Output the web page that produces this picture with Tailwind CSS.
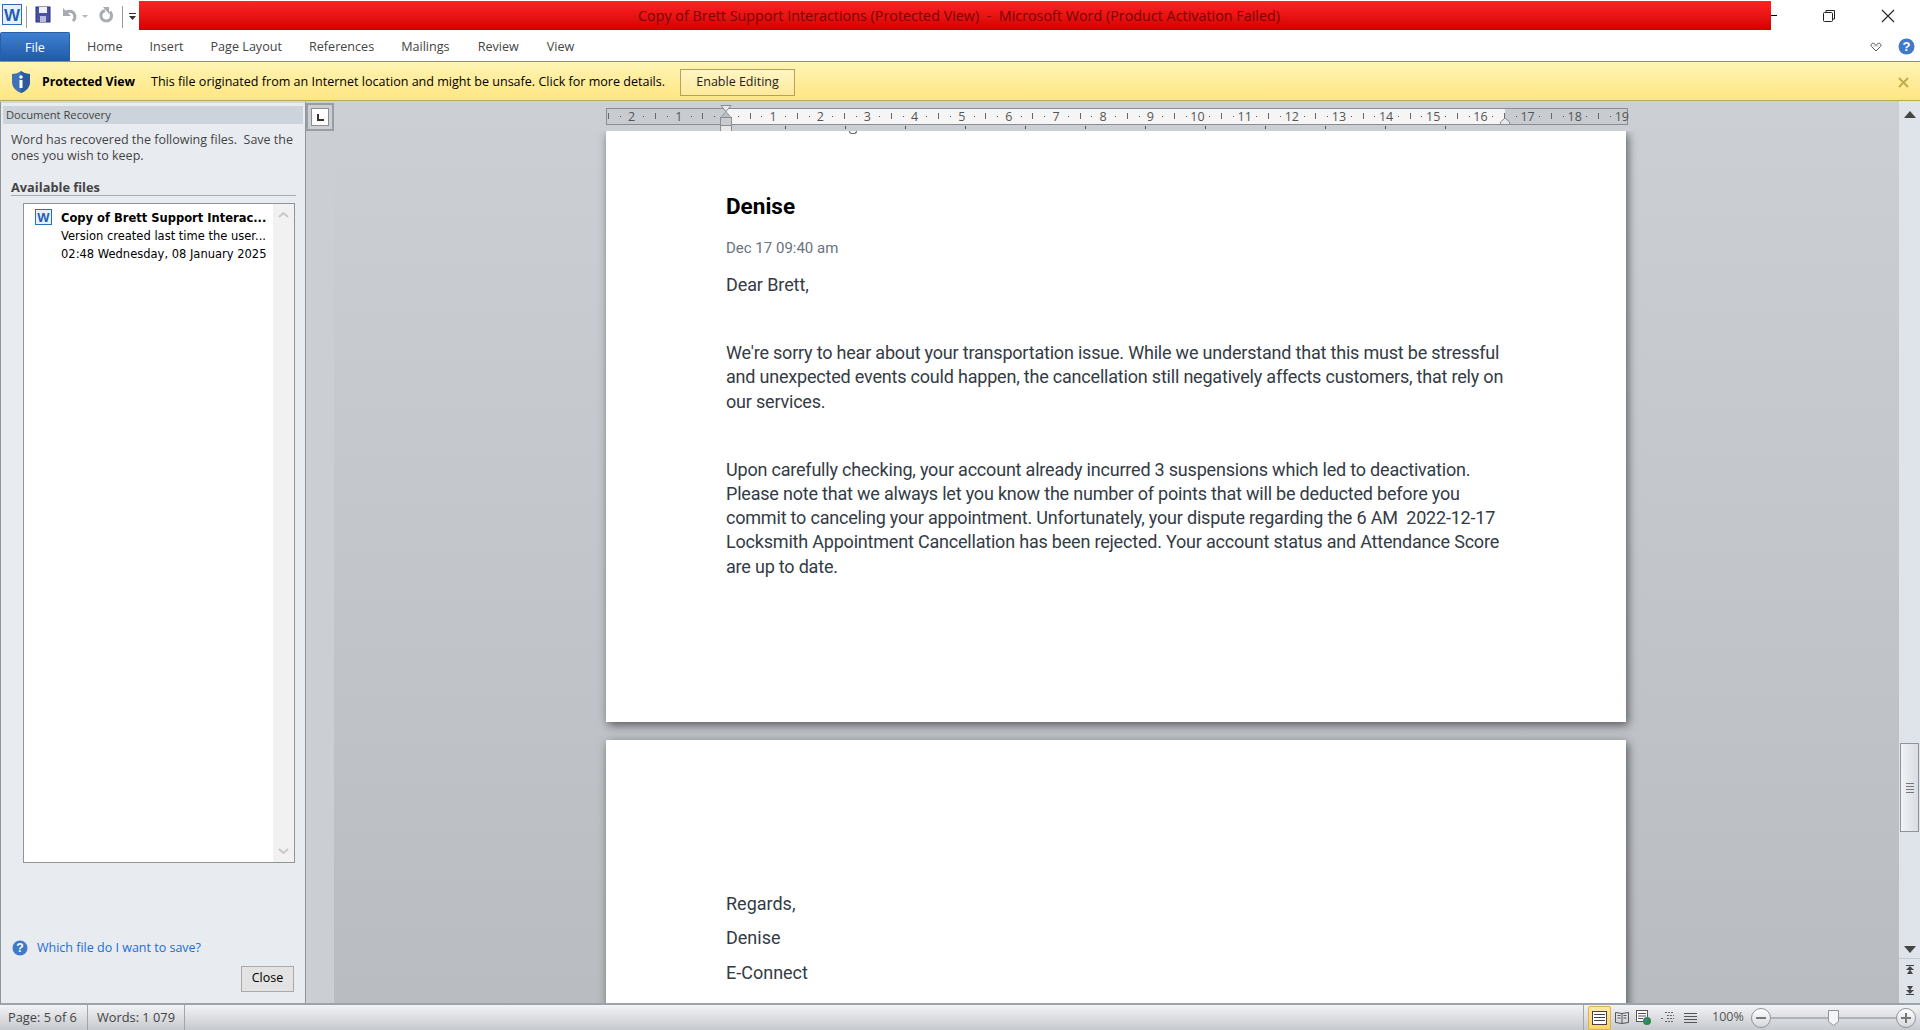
<!DOCTYPE html>
<html lang="en">
<head>
  <meta charset="UTF-8">
  <title>Copy of Brett Support Interactions (Protected View) - Microsoft Word</title>
  <script src="https://cdn.jsdelivr.net/npm/@tailwindcss/browser@4"></script>
</head>
<body class="h-screen overflow-hidden bg-white flex flex-col font-['Open_Sans',sans-serif] text-[12.5px] text-[#3b3b3b]">

  <!-- title bar -->
  <div class="h-[31px] flex shrink-0 items-center">
    <div class="w-[139px] h-full flex items-center pl-[1px]">
      <svg width="138" height="30" viewBox="0 0 138 30">
        <rect x="1.5" y="3.5" width="19" height="20" fill="#e8f1fb" stroke="#2a6fbe"/>
        <text x="11" y="20" text-anchor="middle" font-family="Liberation Sans" font-weight="700" font-size="17" fill="#1f5fb4">W</text>
        <line x1="25.5" y1="5" x2="25.5" y2="27" stroke="#9a9a9a"/>
        <rect x="35" y="6" width="14" height="15" fill="#4a4fa8" stroke="#2c2f73"/>
        <rect x="38" y="6" width="8" height="6" fill="#eef0fa"/>
        <rect x="39" y="15" width="6" height="6" fill="#b8bcdc"/>
        <path d="M64 12c3-3 8-2 9.500 1.500 1 2.500 0 5-1.500 6.500" fill="none" stroke="#a8abb0" stroke-width="3"/>
        <path d="M62 7v8h8z" fill="#a8abb0"/>
        <path d="M81 14h6l-3 3z" fill="#b4b6ba"/>
        <path d="M104 9.500c-3 1-4.500 3.500-4 6 .6 3 3 4.500 5.500 4.500 3 0 5.500-2.500 5-6-.2-1.500-.8-2.500-1.500-3.500" fill="none" stroke="#a8abb0" stroke-width="3"/>
        <path d="M102 6h6v7z" fill="#a8abb0"/>
        <line x1="121.500" y1="5" x2="121.500" y2="27" stroke="#9a9a9a"/>
        <rect x="128" y="12" width="7" height="1" fill="#333"/>
        <path d="M128 15h7l-3.500 4z" fill="#333"/>
      </svg>
    </div>
    <div class="w-[1632px] h-[29px] pl-[8px] bg-gradient-to-b from-[#ff2222] to-[#d40000] flex items-center justify-center text-[14.350px] text-[#7c0303]">
      <span class="whitespace-pre">Copy of Brett Support Interactions (Protected View)  -  Microsoft Word (Product Activation Failed)</span>
    </div>
    <div class="flex-1 flex items-center h-full">
      <div class="w-[6px] h-px bg-black"></div>
      <div class="ml-[45px] w-[14px] h-[14px]">
        <svg width="14" height="14" viewBox="0 0 14 14" fill="none" stroke="#222"><rect x="1.500" y="3.500" width="9" height="9" rx="1"/><path d="M4 3V1.500h8.500V10H11"/></svg>
      </div>
      <div class="ml-[45px] w-[14px] h-[14px]">
        <svg width="14" height="14" viewBox="0 0 14 14" stroke="#222" stroke-width="1.100"><path d="M1 1l12 12M13 1L1 13"/></svg>
      </div>
    </div>
  </div>

  <!-- ribbon tabs -->
  <div class="h-[31px] shrink-0 flex items-end border-b border-[#8d8e8f]">
    <div class="w-[70px] h-[29px] pt-[2px] rounded-t-[2px] bg-gradient-to-b from-[#3f7fd0] to-[#1f5aa8] border border-[#2a5fa8] border-b-0 text-white flex items-center justify-center">File</div>
    <div class="flex h-[29px] pt-[2px] items-center text-[#444] text-[12.600px]">
      <span class="ml-[17px]">Home</span>
      <span class="ml-[27px]">Insert</span>
      <span class="ml-[27px]">Page Layout</span>
      <span class="ml-[27px]">References</span>
      <span class="ml-[27px]">Mailings</span>
      <span class="ml-[28px]">Review</span>
      <span class="ml-[28px]">View</span>
    </div>
    <div class="ml-auto flex items-center h-[29px] pr-[5px]">
      <svg width="12" height="10" viewBox="0 0 12 10" fill="none" stroke="#555" class="mr-[16px]"><path d="M6 9L1.500 4.500c-1.500-2 1-4 2.500-3 1 .6 2 1.500 2 2 0-.5 1-1.400 2-2 1.500-1 4 1 2.500 3L6 9z"/><path d="M3 4h6" stroke="#bbb"/></svg>
      <svg width="17" height="17" viewBox="0 0 17 17"><circle cx="8.500" cy="8.500" r="8" fill="#3f79c8"/><text x="8.500" y="13" text-anchor="middle" font-family="Liberation Sans" font-weight="700" font-size="13" fill="#fff">?</text></svg>
    </div>
  </div>

  <!-- protected view bar -->
  <div class="h-[39px] shrink-0 pt-[2px] flex items-center bg-gradient-to-b from-[#fff4b4] to-[#ffe680] border-b border-[#b9a955]">
    <svg width="20" height="24" viewBox="0 0 20 24" class="ml-[11px]">
      <path d="M10 1c2.500 2 5.500 2.800 9 3v8c0 5-4 9-9 11C5 21 1 17 1 12V4c3.500-.2 6.500-1 9-3z" fill="#3f72b8"/>
      <path d="M10 1c2.500 2 5.500 2.800 9 3v8c0 5-4 9-9 11z" fill="#2c5a9c"/>
      <rect x="8.500" y="10" width="3" height="8" fill="#fff"/><circle cx="10" cy="7" r="1.800" fill="#fff"/>
    </svg>
    <span class="ml-[11px] font-bold text-black text-[12.300px]">Protected View</span>
    <span class="ml-[16px] text-black text-[12.550px]">This file originated from an Internet location and might be unsafe. Click for more details.</span>
    <button class="ml-[15px] w-[115px] h-[27px] bg-gradient-to-b from-[#fff6c4] to-[#ffe99a] border border-[#b3a35a] text-[#222]">Enable Editing</button>
    <svg width="11" height="11" viewBox="0 0 11 11" stroke="#c2ab4e" stroke-width="2" class="ml-auto mr-[11px]"><path d="M1 1l9 9M10 1L1 10"/></svg>
  </div>

  <!-- main -->
  <div class="flex-1 min-h-0 flex">

    <!-- document recovery pane -->
    <div class="w-[306px] shrink-0 bg-[#e8ebf0] border-l border-r border-[#8f949b] border-t-[2px] border-t-[#d3d6da] flex flex-col pt-[3px] px-[1px]">
      <div class="h-[18px] mx-[1px] bg-[#ccd3da] pl-[3px] flex items-center text-[11.200px] text-[#444]">Document Recovery</div>
      <div class="pl-[9px] pr-[8px]">
        <p class="mt-[8px] leading-[16px] text-[#444]">Word has recovered the following files.&nbsp; Save the<br>ones you wish to keep.</p>
        <div class="mt-[14px] h-[18px] border-b border-[#a7abb0] font-bold text-[12.800px] leading-[18px] text-[#444]">Available files</div>
      </div>
      <div class="mt-[7px] ml-[21px] w-[272px] h-[660px] bg-white border border-[#8f949b] flex">
        <div class="flex-1 pl-[4px] pt-[4px] flex">
          <svg width="18" height="17" viewBox="0 0 18 17" class="ml-[7px] mt-[1px]">
            <rect x=".5" y=".5" width="16" height="15" fill="#e8f1fb" stroke="#2a6fbe"/>
            <text x="8.500" y="13" text-anchor="middle" font-family="Liberation Sans" font-weight="700" font-size="13" fill="#1f5fb4">W</text>
          </svg>
          <div class="ml-[8px] font-['DejaVu_Sans',sans-serif] text-[11.500px] leading-[18px] text-black whitespace-nowrap pt-[1px]">
            <div class="font-bold">Copy of Brett Support Interac...</div>
            <div>Version created last time the user...</div>
            <div>02:48 Wednesday, 08 January 2025</div>
          </div>
        </div>
        <div class="w-[21px] bg-[#f1f1f1] flex flex-col justify-between items-center py-[8px]">
          <svg width="11" height="6" viewBox="0 0 11 6" fill="none" stroke="#c8c8c8" stroke-width="2"><path d="M1 5l4.500-4L10 5"/></svg>
          <svg width="11" height="6" viewBox="0 0 11 6" fill="none" stroke="#c8c8c8" stroke-width="2"><path d="M1 1l4.500 4L10 1"/></svg>
        </div>
      </div>
      <div class="mt-[76px] ml-[10px] flex items-center">
        <svg width="16" height="16" viewBox="0 0 17 17"><circle cx="8.500" cy="8.500" r="8" fill="#3f79c8"/><text x="8.500" y="13" text-anchor="middle" font-family="Liberation Sans" font-weight="700" font-size="13" fill="#fff">?</text></svg>
        <span class="ml-[9px] text-[#1a6ed8]">Which file do I want to save?</span>
      </div>
      <button class="mt-[8px] ml-auto mr-[10px] w-[53px] h-[26px] bg-[#e3e3e3] border border-[#a9a9a9] text-black">Close</button>
    </div>

    <!-- workspace -->
    <div class="flex-1 min-w-0 flex bg-gradient-to-b from-[#ccd0d5] to-[#b9bcc0]">
      <!-- tab selector strip -->
      <div class="w-[28px] shrink-0 bg-[#cbced3] pt-[2px]">
        <div class="w-[28px] h-[28px] border-2 border-[#9a9ea4] flex items-center justify-center">
          <div class="w-[18px] h-[18px] bg-white border border-[#8a8e94] flex items-center justify-center">
            <div class="w-[7px] h-[7px] border-l-2 border-b-2 border-[#333]"></div>
          </div>
        </div>
      </div>

      <div class="flex-1 min-w-0 flex flex-col">
        <!-- horizontal ruler -->
        <div class="h-[30px] shrink-0 pl-[272px]">
          <svg id="ruler" width="1030" height="30" viewBox="0 0 1030 30" font-family="Open Sans" font-size="12.500">
            <rect x=".5" y="7.500" width="1021" height="16" fill="#c8ccd1" stroke="#8a8e94"/>
            <rect x="120" y="8" width="779" height="15" fill="#f5f5f5"/>
            <g id="ticks"></g>
            <path d="M115 4.500h10l-5 6 5 6h-10l5-6z" fill="#e8e8e8" stroke="#8a8e94"/>
            <path d="M115.500 16.500l4.500-5.500 4.500 5.500z" fill="#b9bcc0"/>
            <rect x="114.500" y="24.500" width="11" height="6" fill="#e8e8e8" stroke="#8a8e94"/>
            <rect x="114.500" y="16.500" width="11" height="8" fill="#c8ccd1" stroke="#8a8e94"/>
            <path d="M894.500 23.500v-2.500l4.500-4 4.500 4v2.500z" fill="#e8e8e8" stroke="#8a8e94"/>
          </svg>
        </div>

        <!-- pages -->
        <div class="flex-1 min-h-0 overflow-hidden pl-[272px]">
          <div class="w-[1020px] h-[591px] bg-white shadow-[2px_3px_9px_rgba(0,0,0,0.55)] pl-[120px] font-['Roboto',sans-serif] text-[18px] leading-[24.200px] text-[#333b45] relative">
            <div class="absolute left-[243px] top-0 w-[8px] h-[3px] border-b border-x border-[#666] rounded-b-full"></div>
            <div class="pt-[61px] text-[22.500px] leading-[28px] font-bold text-black">Denise</div>
            <div class="mt-[18px] text-[15px] leading-[20px] text-[#6b7280]">Dec 17 09:40 am</div>
            <p class="mt-[15px] tracking-[-0.1px]">Dear Brett,</p>
            <p class="mt-[44px] w-[790px] tracking-[-0.2px]">We're sorry to hear about your transportation issue. While we understand that this must be stressful<br>and unexpected events could happen, the cancellation still negatively affects customers, that rely on<br>our services.</p>
            <p class="mt-[44px] w-[790px] tracking-[-0.2px]">Upon carefully checking, your account already incurred 3 suspensions which led to deactivation.<br>Please note that we always let you know the number of points that will be deducted before you<br>commit to canceling your appointment. Unfortunately, your dispute regarding the 6 AM&nbsp; 2022-12-17<br>Locksmith Appointment Cancellation has been rejected. Your account status and Attendance Score<br>are up to date.</p>
          </div>
          <div class="mt-[18px] w-[1020px] h-[400px] bg-white shadow-[2px_3px_9px_rgba(0,0,0,0.55)] pl-[120px] pt-[152px] font-['Roboto',sans-serif] text-[18px] leading-[24px] text-[#333b45]">
            <p>Regards,</p>
            <p class="mt-[10px]">Denise</p>
            <p class="mt-[11px]">E-Connect</p>
          </div>
        </div>
      </div>

      <!-- vertical scrollbar -->
      <div class="w-[21px] shrink-0 bg-[#dfe3ea] flex flex-col items-center pt-[10px]">
        <svg width="12" height="7" viewBox="0 0 12 7"><path d="M0 7l6-7 6 7z" fill="#444"/></svg>
        <div class="mt-[625px] w-[19px] h-[89px] bg-gradient-to-r from-[#f1f3f6] to-[#d9dce2] border border-[#8f949b] flex flex-col items-center justify-center gap-[2px]">
          <div class="w-[8px] h-px bg-[#777]"></div>
          <div class="w-[8px] h-px bg-[#777]"></div>
          <div class="w-[8px] h-px bg-[#777]"></div>
          <div class="w-[8px] h-px bg-[#777]"></div>
        </div>
        <svg width="12" height="7" viewBox="0 0 12 7" class="mt-[114px]"><path d="M0 0l6 7 6-7z" fill="#444"/></svg>
        <div class="mt-[5px] w-full h-px bg-[#c3c7ce]"></div>
        <svg width="8" height="9" viewBox="0 0 8 9" class="mt-[6px]"><path d="M0 0h8v1H0zM4 1l4 4H0zM4 4.500l3 4.500H1z" fill="#444"/></svg>
        <svg width="8" height="9" viewBox="0 0 8 9" class="mt-[12px]"><path d="M1 0h6L4 4.500zM0 4h8l-4 4zM0 8h8v1H0z" fill="#444"/></svg>
      </div>
    </div>
  </div>

  <!-- status bar -->
  <div class="h-[27px] shrink-0 border-t-[2px] border-[#9da3aa] bg-gradient-to-b from-[#f2f3f5] to-[#c6c9ce] flex items-center text-[12.800px] text-[#444]">
    <div class="w-[88px] h-full border-r border-[#a2a5aa] pl-[8px] flex items-center">Page: 5 of 6</div>
    <div class="w-[97px] h-full border-r border-[#a2a5aa] pl-[9px] flex items-center">Words: 1 079</div>
    <div class="ml-auto h-full flex items-center">
      <div class="w-px h-full bg-[#a2a5aa]"></div>
      <div class="ml-[4px] w-[23px] h-[24px] rounded-[2px] bg-gradient-to-b from-[#ffe9a3] to-[#fbd36a] border border-[#e0b050] flex items-center justify-center">
        <svg width="15" height="14" viewBox="0 0 15 14" fill="none" stroke="#444"><rect x=".5" y=".5" width="14" height="13" fill="#fff"/><path d="M2 3.500h11M2 6.500h11M2 9.500h11"/></svg>
      </div>
      <svg width="14" height="13" viewBox="0 0 14 13" fill="none" stroke="#555" class="ml-[4px]"><path d="M.5 1.500l6.500 1 6.500-1v10L7 12.500l-6.500-1zM7 2.500v10M2.500 4.500h3M2.500 7h3M8.500 4.500h3M8.500 7h3"/></svg>
      <svg width="15" height="15" viewBox="0 0 15 15" class="ml-[7px]"><rect x=".5" y=".5" width="11" height="11" fill="#fff" stroke="#555"/><path d="M2 3.500h8M2 6h8M2 8.500h5" stroke="#555"/><circle cx="11" cy="11" r="4" fill="#2f8a4a"/><circle cx="10" cy="10" r="1.500" fill="#3f79c8"/></svg>
      <svg width="13" height="13" viewBox="0 0 13 13" stroke="#666" class="ml-[10px]"><path d="M4 1.500h9M6 4.500h7M0 7.500h2M6 7.500h7M4 10.500h9" stroke-dasharray="2 1"/></svg>
      <svg width="13" height="12" viewBox="0 0 13 12" stroke="#555" class="ml-[10px]"><path d="M0 1.500h13M0 4.500h13M0 7.500h13M0 10.500h13"/></svg>
      <span class="ml-[15px] w-[30px] text-[12.500px] text-[#555] whitespace-nowrap">100%</span>
      <div class="ml-[9px] w-[20px] h-[20px] rounded-full bg-gradient-to-b from-white to-[#d5d7db] border border-[#8f949b] flex items-center justify-center">
        <div class="w-[10px] h-[2px] bg-[#777]"></div>
      </div>
      <div class="w-[125px] h-[2px] bg-[#aeb2b8] flex items-center pl-[57px]">
        <svg width="11" height="16" viewBox="0 0 11 16" class="shrink-0"><path d="M.5.500h10v11l-5 4-5-4z" fill="#f4f5f6" stroke="#8f949b"/></svg>
      </div>
      <div class="w-[20px] h-[20px] rounded-full bg-gradient-to-b from-white to-[#d5d7db] border border-[#8f949b] flex items-center justify-center relative">
        <div class="w-[10px] h-[2px] bg-[#777]"></div>
        <div class="absolute w-[2px] h-[10px] bg-[#777]"></div>
      </div>
      <div class="w-[4px]"></div>
    </div>
  </div>

  <script>
    // ruler marks: one number per cm, counted from the left margin
    const ticks = document.getElementById('ticks');
    const NS = 'http://www.w3.org/2000/svg';
    const originX = 120, cm = 47.15;

    function mark(x, y, w, h, fill) {
      const r = document.createElementNS(NS, 'rect');
      r.setAttribute('x', Math.round(x)); r.setAttribute('y', y);
      r.setAttribute('width', w); r.setAttribute('height', h);
      r.setAttribute('fill', fill);
      ticks.appendChild(r);
    }

    for (let n = -2; n <= 19; n++) {
      const x = originX + n * cm;
      if (n !== 0) {
        const t = document.createElementNS(NS, 'text');
        t.setAttribute('x', x); t.setAttribute('y', 20);
        t.setAttribute('text-anchor', 'middle'); t.setAttribute('fill', '#555');
        t.textContent = Math.abs(n);
        ticks.appendChild(t);
      }
      if (n < 19) {
        mark(x + cm * 0.25, 15, 1, 1, '#555');
        mark(x + cm * 0.5, 12, 1, 6, '#666');
        mark(x + cm * 0.75, 15, 1, 1, '#555');
      }
    }
    mark(originX - 2.5 * cm, 12, 1, 6, '#666');
    mark(originX - 2.25 * cm, 15, 1, 1, '#555');
    // default tab stops under the ruler
    for (let x = 179; x <= 839; x += 60) mark(x, 25, 1, 3, '#555');
  </script>
</body>
</html>
